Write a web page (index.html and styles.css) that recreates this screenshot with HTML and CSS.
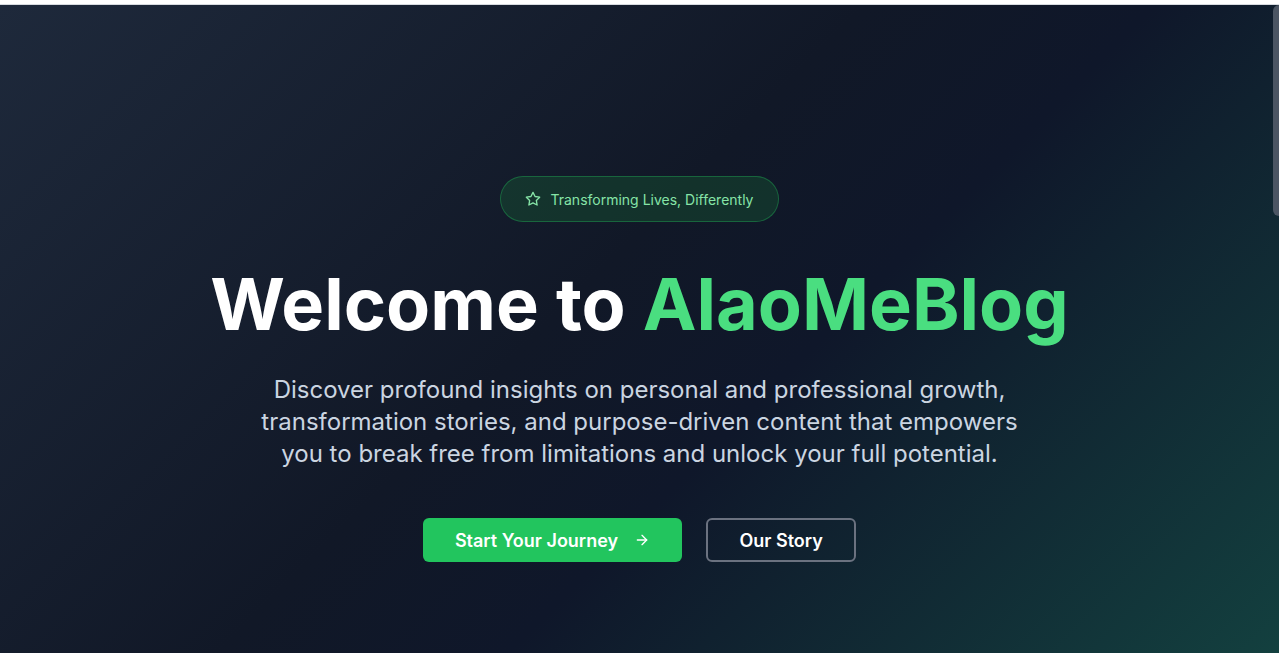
FILE: index.html
```html
<!DOCTYPE html>
<html lang="en">
<head>
<meta charset="utf-8">
<title>AlaoMeBlog</title>
<link rel="stylesheet" href="styles.css">
</head>
<body>
<div class="topbar"></div>
<section class="hero">
  <div class="side-tab"></div>
  <div class="hero-inner">
    <div class="badge">
      <svg class="star" viewBox="0 0 24 24" width="16" height="16" fill="none" stroke="currentColor" stroke-width="2" stroke-linecap="round" stroke-linejoin="round"><polygon points="12 2 15.09 8.26 22 9.27 17 14.14 18.18 21.02 12 17.77 5.82 21.02 7 14.14 2 9.27 8.91 8.26 12 2"/></svg>
      <span>Transforming Lives, Differently</span>
    </div>
    <h1 class="title">Welcome to <span class="accent">AlaoMeBlog</span></h1>
    <p class="lead">Discover profound insights on personal and professional growth, transformation stories, and purpose-driven content that empowers you to break free from limitations and unlock your full potential.</p>
    <div class="actions">
      <a class="btn btn-primary" href="#">Start Your Journey
        <svg viewBox="0 0 24 24" width="16" height="16" fill="none" stroke="currentColor" stroke-width="2" stroke-linecap="round" stroke-linejoin="round"><path d="M5 12h14"/><path d="M12 5l7 7-7 7"/></svg>
      </a>
      <a class="btn btn-outline" href="#">Our Story</a>
    </div>
  </div>
</section>
</body>
</html>
```
FILE: styles.css
```css
* { box-sizing: border-box; }
html, body { margin: 0; padding: 0; }
body {
  font-family: Inter, "Noto Sans", sans-serif;
  background: #ffffff;
  overflow: hidden;
}
.topbar {
  height: 5px;
  background: #ffffff;
  border-bottom: 1px solid #d7dbe0;
}
.hero {
  position: relative;
  height: 648px;
  background: linear-gradient(135deg, #1e293b 0%, #111827 45%, #0f172a 60%, #13403f 100%);
  display: flex;
  justify-content: center;
}
.side-tab {
  position: absolute;
  right: 0;
  top: 0;
  width: 6px;
  height: 211px;
  background: #4b5563;
  border-radius: 8px 0 0 8px;
}
.hero-inner {
  display: flex;
  flex-direction: column;
  align-items: center;
  padding-top: 171px;
  text-align: center;
}
.badge {
  display: inline-flex;
  align-items: center;
  gap: 9px;
  height: 46px;
  padding: 0 24px 0 24px;
  border-radius: 9999px;
  background: rgba(22, 101, 52, 0.35);
  border: 1px solid rgba(34, 197, 94, 0.35);
  color: #86e4a7;
  font-size: 14px;
  font-weight: 400;
}
.star { color: #86e4a7; }
.title {
  margin: 46px 0 0;
  font-size: 72px;
  line-height: 1;
  font-weight: 700;
  color: #ffffff;
  letter-spacing: 0;
}
.accent { color: #4ade80; }
.lead {
  margin: 34px 0 0;
  max-width: 768px;
  font-size: 24px;
  line-height: 32px;
  color: #cbd5e1;
}
.actions {
  display: flex;
  gap: 24px;
  margin-top: 48px;
}
.btn {
  display: inline-flex;
  align-items: center;
  justify-content: center;
  height: 44px;
  border-radius: 6px;
  font-size: 18px;
  font-weight: 600;
  text-decoration: none;
  color: #ffffff;
  white-space: nowrap;
}
.btn-primary {
  background: #22c55e;
  padding: 0 32px;
  gap: 16px;
}
.btn-outline {
  border: 2px solid #6b7280;
  width: 150px;
}
```
